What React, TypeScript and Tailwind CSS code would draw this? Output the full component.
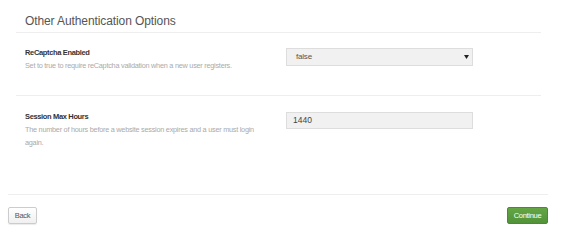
const font = "font-['Liberation_Sans',Arial,sans-serif]";

function SettingRow({
  label,
  description,
  children,
  className,
}: {
  label: string;
  description: string;
  children: React.ReactNode;
  className: string;
}) {
  return (
    <div className={`flex ${className}`}>
      <div className="w-[270px] shrink-0 pl-[9px]">
        <div className="text-[7.5px] font-bold leading-[10px] tracking-[-0.35px] text-[#333]">{label}</div>
        <p className="mt-[1px] w-[232px] text-[7.3px] leading-[13px] tracking-[-0.25px] text-[#aaa]">{description}</p>
      </div>
      <div className="w-[187px]">{children}</div>
    </div>
  );
}

export default function App() {
  return (
    <div className={`w-[567px] h-[242px] overflow-hidden bg-white ${font}`}>
      <div className="pl-4 pr-[26px]">
        <h2 className="border-b border-[#eee] pl-[9px] pt-[13px] pb-[3px] text-[12px] font-normal leading-[16px] tracking-[-0.1px] text-[#555]">
          Other Authentication Options
        </h2>

        <SettingRow
          label="ReCaptcha Enabled"
          description="Set to true to require reCaptcha validation when a new user registers."
          className="h-[63px] border-b border-[#eee] pt-[15px]"
        >
          <div className="flex h-[18px] items-center justify-between border border-[#ddd] bg-[#f1f1f1] pl-[9px] pr-[3px] text-[8px] tracking-[-0.2px] text-[#555]">
            <span>false</span>
            <svg width="5" height="4" viewBox="0 0 5 4">
              <path d="M0 0h5L2.5 4z" fill="#222" />
            </svg>
          </div>
        </SettingRow>

        <SettingRow
          label="Session Max Hours"
          description="The number of hours before a website session expires and a user must login again."
          className="h-[98px] pt-[16px]"
        >
          <div className="flex h-[17px] items-center border border-[#ddd] bg-[#f1f1f1] pl-[6px] text-[8.5px] text-[#444]">
            1440
          </div>
        </SettingRow>
      </div>

      <div className="ml-2 mr-[19px] flex items-start justify-between border-t border-[#eee] pt-3">
        <button className="h-[17px] w-[29px] rounded-[2px] border border-[#ccc] bg-gradient-to-b from-white to-[#f0f0f0] text-[7.5px] leading-[15px] tracking-[-0.3px] text-[#555] shadow-[0_1px_1px_rgba(0,0,0,0.08)]">
          Back
        </button>
        <button className="h-[17px] w-[41px] rounded-[2px] border border-[#4b8a32] bg-gradient-to-b from-[#64a544] to-[#52933a] text-[7.5px] leading-[15px] tracking-[-0.3px] text-white">
          Continue
        </button>
      </div>
    </div>
  );
}
